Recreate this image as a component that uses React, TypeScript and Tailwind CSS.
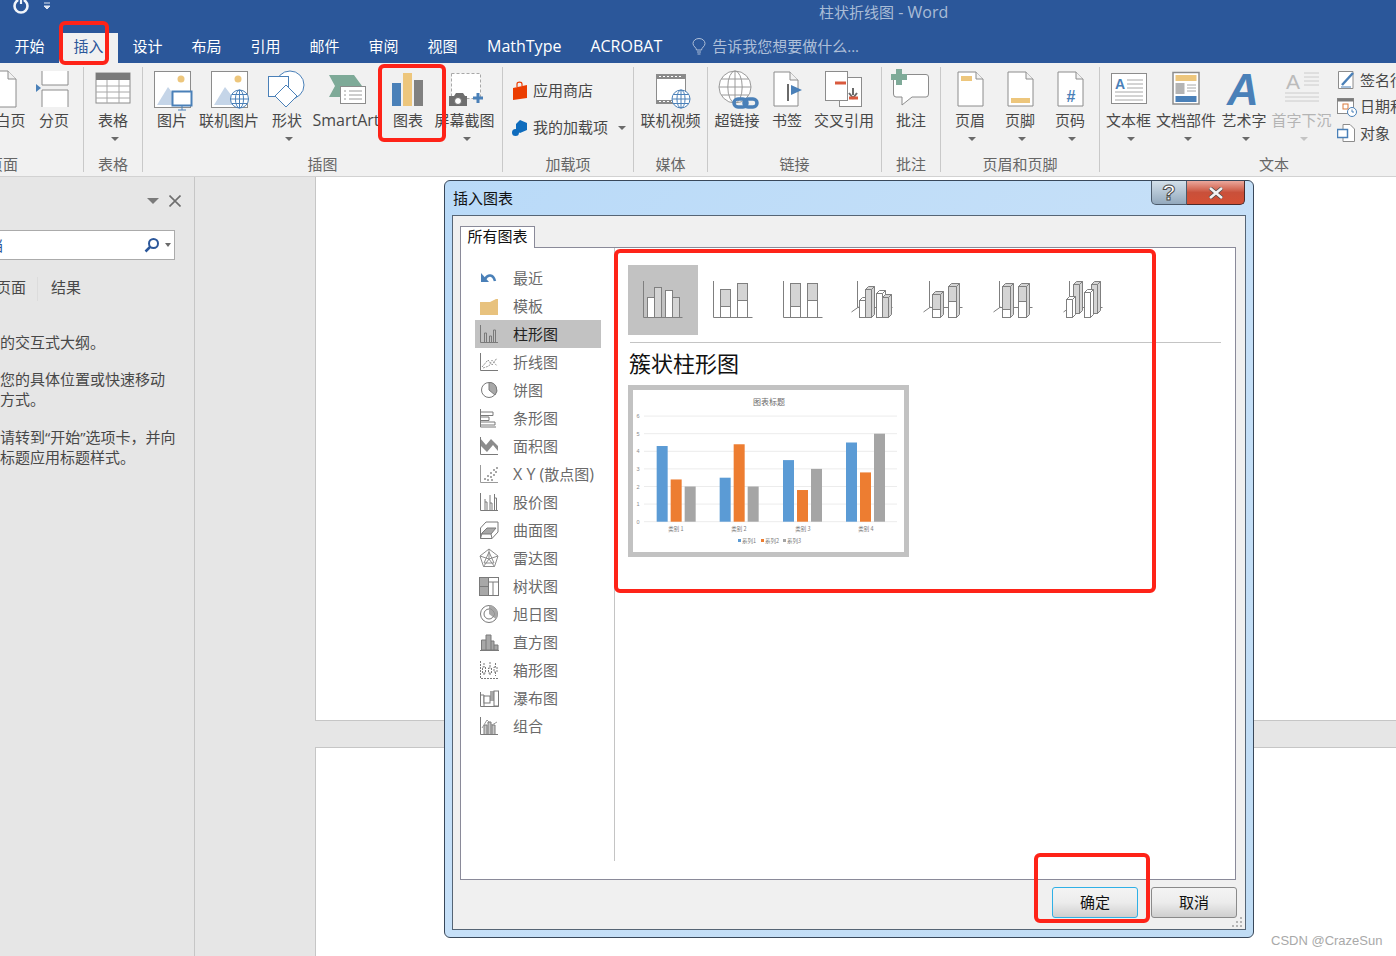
import React from "react";

const G = "#8c8c8c";
const B = "#4a80b8";
const Y = "#edc67c";
const T = "#7eaa98";
const R = "#d9593d";

function Ic({ children }: { children: React.ReactNode }) {
  return (
    <svg width="60" height="40" viewBox="-30 0 60 40" className="shrink-0 overflow-visible" fill="none">
      {children}
    </svg>
  );
}

function Page({ x0, x1, y0, y1, fold = 7 }: { x0: number; x1: number; y0: number; y1: number; fold?: number }) {
  return (
    <>
      <path d={`M${x0} ${y0}H${x1 - fold}L${x1} ${y0 + fold}V${y1}H${x0}Z`} fill="#fff" stroke={G} />
      <path d={`M${x1 - fold} ${y0}V${y0 + fold}H${x1}`} stroke={G} fill="#f1f1f1" />
    </>
  );
}

function Globe({ cx, cy, r, c = B, w = 1 }: { cx: number; cy: number; r: number; c?: string; w?: number }) {
  return (
    <g stroke={c} strokeWidth={w} fill="#fff">
      <circle cx={cx} cy={cy} r={r} />
      <ellipse cx={cx} cy={cy} rx={r * 0.45} ry={r} fill="none" />
      <path d={`M${cx - r} ${cy}H${cx + r}M${cx - r * 0.85} ${cy - r * 0.5}H${cx + r * 0.85}M${cx - r * 0.85} ${cy + r * 0.5}H${cx + r * 0.85}M${cx} ${cy - r}V${cy + r}`} fill="none" />
    </g>
  );
}

function Btn({ w, label, arrow, dim, latin, children }: { w: string; label: string; arrow?: boolean; dim?: boolean; latin?: boolean; children: React.ReactNode }) {
  return (
    <div className={`${w} flex flex-col items-center shrink-0`}>
      <Ic>{children}</Ic>
      <div className={`mt-px h-[22px] leading-[22px] whitespace-nowrap ${latin ? "text-[16px]" : "text-[15px]"} ${dim ? "text-[#b4b4b4]" : "text-[#484848]"}`}>{label}</div>
      {arrow ? (
        <div className={`mt-[6px] ml-[4px] w-0 h-0 border-x-[4px] border-x-transparent border-t-[4px] ${dim ? "border-t-[#c4c4c4]" : "border-t-[#6a6a6a]"}`} />
      ) : null}
    </div>
  );
}

function Group({ w, label, border = true, children }: { w: string; label: string; border?: boolean; children: React.ReactNode }) {
  return (
    <div className={`${w} shrink-0 mt-[4px] h-[105px] pt-px ${border ? "border-r border-[#c9c9c9]" : ""}`}>
      <div className="h-[88px] flex">{children}</div>
      <div className="h-[16px] leading-[16px] text-center text-[15px] text-[#666666] whitespace-nowrap">{label}</div>
    </div>
  );
}

function Ribbon() {
  return (
    <div className="h-[114px] bg-[#f1f1f1] border-b border-[#d2d2d2] overflow-hidden">
      <div className="flex -ml-[77px] w-[1600px]">
        <Group w="w-[161px]" label="页面">
          <Btn w="w-[47px]" label="封面"><Page x0={-12} x1={12} y0={3} y1={39} /></Btn>
          <Btn w="w-[66px]" label="空白页"><Page x0={-13} x1={13} y0={3} y1={39} fold={8} /></Btn>
          <Btn w="w-[36px]" label="分页">
            <path d="M-12 3V17H14V3M-12 39V22H14V39" stroke={G} fill="#fff" />
            <path d="M-18 16L-13 20L-18 24Z" fill={B} />
          </Btn>
        </Group>
        <Group w="w-[59px]" label="表格">
          <Btn w="w-[58px]" label="表格" arrow>
            <rect x="-17" y="5" width="34" height="30" fill="#fff" stroke={G} />
            <rect x="-17" y="5" width="34" height="7" fill="#7a7a7a" />
            <path d="M-17 18H17M-17 24H17M-17 30H17M-6 12V35M6 12V35" stroke="#a8a8a8" />
          </Btn>
        </Group>
        <Group w="w-[360px]" label="插图">
          <div className="w-[7px] shrink-0" />
          <Btn w="w-[44px]" label="图片">
            <rect x="-17.5" y="3.5" width="36" height="36" fill="#fff" stroke={G} />
            <circle cx="9" cy="11" r="3.5" fill={Y} />
            <path d="M-15 37L-4 19L3 28L3 37Z" fill="#c5d5e8" />
            <rect x="0.5" y="23.5" width="19" height="14" fill="#fff" stroke={B} strokeWidth="2" />
            <path d="M10 38V42M6 42H14" stroke={B} />
          </Btn>
          <Btn w="w-[70px]" label="联机图片">
            <rect x="-17.5" y="3.5" width="36" height="36" fill="#fff" stroke={G} />
            <circle cx="9" cy="11" r="3.5" fill={Y} />
            <path d="M-15 37L-4 19L6 32V37Z" fill="#c5d5e8" />
            <Globe cx={10.5} cy={31} r={9} />
          </Btn>
          <Btn w="w-[46px]" label="形状" arrow>
            <circle cx="3" cy="17" r="14" fill="#fff" stroke={B} />
            <rect x="-18.5" y="8.5" width="20" height="20" fill="#fff" stroke={B} />
            <path d="M-1 17L10 28L-1 39L-12 28Z" fill="#fff" stroke={B} />
          </Btn>
          <Btn w="w-[72px]" label="SmartArt" latin>
            <path d="M-17 7H8L16 18H-6V29H-17L-11 18Z" fill={T} />
            <rect x="-5.5" y="18.5" width="25" height="17" fill="#fff" stroke={G} />
            <path d="M-2 23H0M-2 27H0M-2 31H0M3 23H16M3 27H16M3 31H16" stroke="#9a9a9a" />
          </Btn>
          <Btn w="w-[52px]" label="图表">
            <rect x="-16" y="15" width="9" height="23" fill={B} />
            <rect x="-5" y="5" width="9" height="33" fill={Y} />
            <rect x="6" y="12" width="9" height="26" fill="#808080" />
          </Btn>
          <Btn w="w-[61px]" label="屏幕截图" arrow>
            <rect x="-13.5" y="5.5" width="29" height="25" fill="#fff" stroke="#a8a8a8" strokeDasharray="3 2" />
            <path d="M-16 28H-11L-9 25H-2L0 28H2V38H-16Z" fill="#6e6e6e" />
            <circle cx="-7" cy="33" r="3.5" fill="#fff" stroke="#6e6e6e" />
            <path d="M13 25V35M8 30H18" stroke={B} strokeWidth="3" />
          </Btn>
        </Group>
        <Group w="w-[131px]" label="加载项">
          <div className="pl-[9px] pt-[4px] flex flex-col">
            <div className="h-[37px] flex items-center gap-[5px] text-[15px] text-[#484848] whitespace-nowrap">
              <svg width="16" height="20" viewBox="0 0 16 20" className="shrink-0">
                <path d="M1 7L15 4V17L1 19Z" fill="#eb3c00" />
                <path d="M5 6V3C5 0.5 10 0.5 10 3V5" stroke="#eb3c00" strokeWidth="1.2" fill="none" />
              </svg>
              应用商店
            </div>
            <div className="h-[37px] flex items-center gap-[5px] text-[15px] text-[#484848] whitespace-nowrap">
              <svg width="16" height="18" viewBox="0 0 16 18" className="shrink-0">
                <path d="M8 1L15 4V11L8 14L4 12V5Z" fill="#0f6cbd" />
                <circle cx="3.5" cy="13.5" r="3.5" fill="#0f6cbd" />
              </svg>
              我的加载项
              <div className="ml-[5px] w-0 h-0 border-x-[4px] border-x-transparent border-t-[4px] border-t-[#6a6a6a]" />
            </div>
          </div>
        </Group>
        <Group w="w-[74px]" label="媒体">
          <Btn w="w-[73px]" label="联机视频">
            <rect x="-14.5" y="6.5" width="29" height="29" fill="#fff" stroke={G} />
            <path d="M-14 7H14V11H-14ZM-14 32H14V35.5H-14Z" fill="#8a8a8a" />
            <path d="M-12 8.5H12M-12 33.5H12" stroke="#fff" strokeDasharray="2 2" />
            <Globe cx={10} cy={31} r={9} />
          </Btn>
        </Group>
        <Group w="w-[174px]" label="链接">
          <div className="w-[4px] shrink-0" />
          <Btn w="w-[50px]" label="超链接">
            <Globe cx={-2} cy={19} r={16} c="#9a9a9a" />
            <g stroke={B} strokeWidth="3.5" fill="none">
              <rect x="-3" y="31" width="13" height="8" rx="4" />
              <rect x="7" y="31" width="13" height="8" rx="4" />
            </g>
          </Btn>
          <Btn w="w-[50px]" label="书签">
            <Page x0={-13} x1={11} y0={4} y1={38} fold={8} />
            <path d="M1 16V33" stroke="#6a6a6a" strokeWidth="2" />
            <path d="M4 17L15 22L4 27Z" fill={B} />
          </Btn>
          <Btn w="w-[64px]" label="交叉引用">
            <rect x="-4.5" y="9.5" width="22" height="29" fill="#fff" stroke={G} />
            <rect x="-18.5" y="3.5" width="22" height="29" fill="#fff" stroke={G} />
            <path d="M-9 15H2" stroke={R} strokeWidth="3" />
            <path d="M9 20V27M5 25L9 30L13 25" stroke="#6a6a6a" strokeWidth="2" />
            <path d="M5 30H14" stroke={R} strokeWidth="3" />
          </Btn>
        </Group>
        <Group w="w-[59px]" label="批注">
          <Btn w="w-[58px]" label="批注">
            <path d="M-16 6.5H15Q17.5 6.5 17.5 9V26Q17.5 29 15 29H1L-9 37V29H-15Q-17.5 29 -17.5 26V9Q-17.5 6.5 -16 6.5Z" fill="#fff" stroke={G} />
            <path d="M-12 1V17M-20 9H-4" stroke={T} strokeWidth="6" />
          </Btn>
        </Group>
        <Group w="w-[159px]" label="页眉和页脚">
          <div className="w-[4px] shrink-0" />
          <Btn w="w-[50px]" label="页眉" arrow>
            <Page x0={-12} x1={13} y0={4} y1={38} />
            <rect x="-9" y="8" width="11" height="5" fill={Y} />
          </Btn>
          <Btn w="w-[50px]" label="页脚" arrow>
            <Page x0={-12} x1={13} y0={4} y1={38} />
            <rect x="-9" y="30" width="19" height="5" fill={Y} />
          </Btn>
          <Btn w="w-[50px]" label="页码" arrow>
            <Page x0={-12} x1={13} y0={4} y1={38} />
            <text x="1" y="34" textAnchor="middle" fontSize="16" fontFamily="Liberation Sans" fontWeight="700" fill={B}>#</text>
          </Btn>
        </Group>
        <Group w="w-[348px]" label="文本" border={false}>
          <div className="w-[3px] shrink-0" />
          <Btn w="w-[51px]" label="文本框" arrow>
            <rect x="-17.5" y="5.5" width="35" height="30" fill="#fff" stroke={G} />
            <text x="-14" y="21" fontSize="14" fontWeight="700" fontFamily="Liberation Sans" fill={B}>A</text>
            <path d="M-2 12H14M-2 16H14M-2 20H14M-14 24H14M-14 28H14M-14 32H14" stroke="#a8a8a8" />
          </Btn>
          <Btn w="w-[64px]" label="文档部件" arrow>
            <rect x="-13" y="4.5" width="26" height="31.5" fill="#fff" stroke={G} strokeWidth="1.5" />
            <rect x="-10.5" y="7" width="21" height="6" fill={Y} />
            <rect x="-10.5" y="15" width="9" height="11" fill="#b4b4b4" />
            <path d="M1 17H10M1 20H10M1 23H10" stroke="#a8a8a8" />
            <rect x="-10.5" y="28" width="21" height="6" fill={B} />
          </Btn>
          <Btn w="w-[52px]" label="艺术字" arrow>
            <text x="-1" y="37" textAnchor="middle" fontSize="44" fontFamily="Liberation Sans" fontStyle="italic" fontWeight="700" fill={B}>A</text>
          </Btn>
          <Btn w="w-[63px]" label="首字下沉" arrow dim>
            <text x="-16" y="21" fontSize="21" fontFamily="Liberation Sans" fill="#bbbbbb">A</text>
            <path d="M2 5H17M2 9H17M2 13H17M2 17H17M-17 25H17M-17 29H17M-17 33H17" stroke="#cccccc" />
          </Btn>
          <div className="ml-[4px] -mt-px flex flex-col text-[15px] text-[#484848] whitespace-nowrap">
            <div className="h-[26px] flex items-center gap-[3px]">
              <svg width="20" height="20" viewBox="0 0 20 20" className="shrink-0">
                <path d="M1.5 1.5H16V18.5H1.5Z" fill="#fff" stroke={G} />
                <path d="M5 15L16 3" stroke={B} strokeWidth="2.5" />
                <path d="M4 17H14" stroke={B} />
              </svg>
              签名行
            </div>
            <div className="h-[27px] flex items-center gap-[3px]">
              <svg width="20" height="20" viewBox="0 0 20 20" className="shrink-0">
                <rect x="0.5" y="1.5" width="16" height="15" fill="#fff" stroke={G} />
                <rect x="0.5" y="1.5" width="16" height="3" fill="#7a7a7a" />
                <rect x="6" y="7" width="5" height="5" fill="#fff" stroke="#d97a3d" />
                <circle cx="15" cy="15" r="4.5" fill="#fff" stroke={B} />
                <path d="M15 12.5V15H17" stroke={B} fill="none" />
              </svg>
              日期和时间
            </div>
            <div className="h-[26px] flex items-center gap-[3px]">
              <svg width="20" height="20" viewBox="0 0 20 20" className="shrink-0">
                <path d="M6 1.5H13L17.5 6V18.5H6Z" fill="#fff" stroke={G} />
                <rect x="0.5" y="6.5" width="10" height="8" fill="#fff" stroke={B} strokeWidth="1.5" />
              </svg>
              对象
            </div>
          </div>
        </Group>
      </div>
    </div>
  );
}

const listIcons: Record<string, React.ReactNode> = {
  recent: (
    <>
      <path d="M6 11C9 6 14 6 16 13" stroke={B} strokeWidth="2.5" fill="none" />
      <path d="M2 5V14H10Z" fill={B} />
    </>
  ),
  folder: <path d="M1 6H11L17 3H19V19H1Z" fill="#e8c27e" />,
  col: <path d="M1.5 1V18.5H19M5.5 18V9H7.5V18M10.5 18V12H12.5V18M14.5 18V6H16.5V18" stroke="#7a7a7a" fill="none" />,
  line: (
    <>
      <path d="M1.5 1V18.5H19" stroke="#7a7a7a" fill="none" />
      <path d="M3 15L9 8L13 13L18 6" stroke="#8c8c8c" strokeDasharray="2 1" fill="none" />
      <path d="M4 16L10 14L13 8L18 14" stroke="#a0a0a0" strokeDasharray="2 1" fill="none" />
    </>
  ),
  pie: (
    <>
      <circle cx="10" cy="10" r="7.5" fill="#fff" stroke="#7a7a7a" />
      <path d="M10 10V2.5A7.5 7.5 0 0 1 16 15Z" fill="#a8a8a8" stroke="#7a7a7a" />
    </>
  ),
  bar: <path d="M1.5 1V19H17M2 4H14V7.5H2M2 9H10V12.5H2M2 14H16V17H2" stroke="#7a7a7a" fill="none" />,
  area: (
    <>
      <path d="M1 2L7 9L12 3L19 10V15L14 9L8 16L1 9Z" fill="#8c8c8c" />
      <path d="M1.5 1V18.5H19" stroke="#7a7a7a" fill="none" />
    </>
  ),
  xy: (
    <>
      <path d="M1.5 1V18.5H19" stroke="#9a9a9a" fill="none" />
      <path d="M5 14h2v2h-2zM8 11h2v2h-2zM8 15h2v2h-2zM11 8h2v2h-2zM11 12h2v2h-2zM14 5h2v2h-2zM14 10h2v2h-2zM16 7h2v2h-2zM12 15h2v2h-2zM17 3h2v2h-2z" fill="#a8a8a8" />
    </>
  ),
  stock: <path d="M1.5 1V18.5H19M6 7V18M6 10H8V18M11 3V18M11 11H13V18M15.5 2V18M15.5 6H17.5V18" stroke="#7a7a7a" fill="none" />,
  surface: (
    <>
      <path d="M1.5 8L7 2H19V12L13 18.5H1.5Z" fill="#fff" stroke="#7a7a7a" />
      <path d="M3 13L8 8H17L12 14H3Z" fill="#a8a8a8" stroke="#7a7a7a" />
      <path d="M1.5 18.5L3 13M13 18.5L12 14M13 18.5" stroke="#7a7a7a" fill="none" />
    </>
  ),
  radar: <path d="M10 1L19 8L15.5 18.5H4.5L1 8ZM10 1V11M1 8L10 11L19 8M4.5 18.5L10 11L15.5 18.5M10 4L5 15H15L10 4" stroke="#8c8c8c" fill="none" />,
  tree: (
    <>
      <rect x="0.5" y="1.5" width="19" height="18" fill="#fff" stroke="#7a7a7a" />
      <rect x="0.5" y="1.5" width="9" height="9" fill="#a8a8a8" stroke="#7a7a7a" />
      <rect x="0.5" y="10.5" width="9" height="9" fill="#a8a8a8" stroke="#7a7a7a" />
      <path d="M9.5 6H19.5M14 6V19.5" stroke="#7a7a7a" />
    </>
  ),
  sun: (
    <>
      <circle cx="10" cy="10" r="8.5" fill="#fff" stroke="#7a7a7a" />
      <path d="M10 1.5A8.5 8.5 0 0 1 17 15L14 13A5 5 0 0 0 10 5Z" fill="#a8a8a8" />
      <circle cx="10" cy="10" r="5" fill="none" stroke="#7a7a7a" />
      <path d="M10 5A5 5 0 0 1 14 13L10 10Z" fill="#a8a8a8" />
    </>
  ),
  hist: (
    <>
      <path d="M2.5 18V8H7V3H12V9H15V13H19V18Z" fill="#a8a8a8" stroke="#7a7a7a" />
      <path d="M7 8V18M12 9V18M15 13V18M1 18.5H20" stroke="#7a7a7a" fill="none" />
    </>
  ),
  box: <path d="M1.5 1V18.5H19M5 3V7M3.5 7H6.5V13H3.5ZM5 13V16M11 2V8M9.5 8H12.5V13H9.5ZM11 13V16M16.5 3V7M15 7H18V12H15ZM16.5 12V16" stroke="#7a7a7a" strokeDasharray="2 1" fill="none" />,
  fall: (
    <>
      <path d="M1.5 4V18.5H19.5V4M1.5 7H5V18" stroke="#7a7a7a" fill="none" />
      <rect x="11" y="3" width="4" height="10" fill="#a8a8a8" />
      <rect x="5" y="8" width="6" height="7" fill="#fff" stroke="#7a7a7a" />
      <rect x="15" y="3" width="4.5" height="15" fill="#fff" stroke="#7a7a7a" />
    </>
  ),
  combo: (
    <>
      <path d="M1.5 1V18.5H19" stroke="#7a7a7a" fill="none" />
      <path d="M5 18V9H8V18M9 18V6H12V18M13 18V9H16V18" stroke="#7a7a7a" fill="#c8c8c8" />
      <path d="M3 12L8 4L13 9L18 6" stroke="#9a9a9a" fill="none" />
    </>
  ),
};

const listItems: [string, React.ReactNode][] = [
  ["recent", "最近"],
  ["folder", "模板"],
  ["col", "柱形图"],
  ["line", "折线图"],
  ["pie", "饼图"],
  ["bar", "条形图"],
  ["area", "面积图"],
  ["xy", <span key="xy"><span className="text-[16px]">X Y (</span>散点图<span className="text-[16px]">)</span></span>],
  ["stock", "股价图"],
  ["surface", "曲面图"],
  ["radar", "雷达图"],
  ["tree", "树状图"],
  ["sun", "旭日图"],
  ["hist", "直方图"],
  ["box", "箱形图"],
  ["fall", "瀑布图"],
  ["combo", "组合"],
];

function Cuboid({ x, w, top, bot, mid, d = 3, fill = "#fff" }: { x: number; w: number; top: number; bot: number; mid?: number; d?: number; fill?: string }) {
  const topFill = mid !== undefined ? "#d4d4d4" : fill;
  return (
    <g stroke="#7f7f7f">
      <rect x={x} y={top} width={w} height={bot - top} fill={topFill} />
      {mid !== undefined ? <rect x={x} y={mid} width={w} height={bot - mid} fill="#fff" /> : null}
      <path d={`M${x} ${top}L${x + d} ${top - d}H${x + w + d}L${x + w} ${top}Z`} fill={topFill} />
      <path d={`M${x + w} ${top}L${x + w + d} ${top - d}V${bot - d}L${x + w} ${bot}Z`} fill={topFill} />
    </g>
  );
}

function Bar2({ x, w, top, mid, fill }: { x: number; w: number; top: number; mid?: number; fill?: string }) {
  return (
    <g stroke="#7f7f7f">
      <rect x={x} y={top} width={w} height={52.5 - top} fill={mid !== undefined ? "#d4d4d4" : fill} />
      {mid !== undefined ? <rect x={x} y={mid} width={w} height={52.5 - mid} fill="#fff" /> : null}
    </g>
  );
}

const Axes2D = () => <path d="M15.5 16V52.5H54.5" stroke="#7f7f7f" fill="none" />;
const Axes3D = ({ x }: { x: number }) => (
  <path d={`M${x} 16V42.5H54.5M${x - 6} 47L${x + 1} 42`} stroke="#7f7f7f" fill="none" />
);

const subTypes: React.ReactNode[] = [
  <>
    <Axes2D />
    <Bar2 x={19.5} w={7} top={32.5} fill="#fff" />
    <Bar2 x={26.5} w={7} top={22.5} fill="#d4d4d4" />
    <Bar2 x={37.5} w={7} top={25.5} fill="#fff" />
    <Bar2 x={44.5} w={7} top={32.5} fill="#d4d4d4" />
  </>,
  <>
    <Axes2D />
    <Bar2 x={22.5} w={10} top={24.5} mid={41.5} />
    <Bar2 x={39.5} w={10} top={18.5} mid={35.5} />
  </>,
  <>
    <Axes2D />
    <Bar2 x={22.5} w={10} top={18.5} mid={41.5} />
    <Bar2 x={39.5} w={10} top={18.5} mid={35.5} />
  </>,
  <>
    <Axes3D x={19.5} />
    <Cuboid x={21.5} w={6} top={35.5} bot={52.5} />
    <Cuboid x={27.5} w={6} top={24.5} bot={52.5} fill="#d4d4d4" />
    <Cuboid x={38.5} w={6} top={28.5} bot={52.5} />
    <Cuboid x={44.5} w={6} top={32.5} bot={52.5} fill="#d4d4d4" />
  </>,
  <>
    <Axes3D x={21.5} />
    <Cuboid x={24.5} w={8} top={29.5} mid={44.5} bot={52.5} />
    <Cuboid x={40.5} w={8} top={21.5} mid={36.5} bot={52.5} />
  </>,
  <>
    <Axes3D x={21.5} />
    <Cuboid x={24.5} w={8} top={21.5} mid={44.5} bot={52.5} />
    <Cuboid x={40.5} w={8} top={21.5} mid={36.5} bot={52.5} />
  </>,
  <>
    <Axes3D x={21.5} />
    <Cuboid x={25.5} w={6} top={19.5} bot={48.5} fill="#d4d4d4" />
    <Cuboid x={43.5} w={6} top={19.5} bot={48.5} fill="#d4d4d4" />
    <Cuboid x={18.5} w={6} top={34.5} bot={52.5} />
    <Cuboid x={36.5} w={6} top={27.5} bot={52.5} />
  </>,
];

function ChartPreview() {
  const y0 = 131.7;
  const unit = 17.6;
  const vals: [number, string, number][] = [
    [110, "#5b9bd5", 4.3], [152, "#ed7d31", 2.4], [194, "#a5a5a5", 2],
    [299, "#5b9bd5", 2.5], [341, "#ed7d31", 4.4], [383, "#a5a5a5", 2],
    [489, "#5b9bd5", 3.5], [531, "#ed7d31", 1.8], [573, "#a5a5a5", 3],
    [678, "#5b9bd5", 4.5], [720, "#ed7d31", 2.8], [762, "#a5a5a5", 5],
  ];
  const tf = "Noto Sans CJK SC";
  return (
    <svg width="271" height="162" viewBox="0 0 271 162" className="bg-white block">
      <text x="136" y="15" textAnchor="middle" fontSize="8" fill="#6a6a6a" fontFamily={tf}>图表标题</text>
      {[0, 1, 2, 3, 4, 5, 6].map((n) => (
        <g key={n}>
          <line x1="11" x2="264" y1={y0 - n * unit} y2={y0 - n * unit} stroke="#ececec" />
          <text x="5" y={y0 - n * unit + 2} textAnchor="middle" fontSize="5.5" fill="#8a8a8a" fontFamily="Liberation Sans">{n}</text>
        </g>
      ))}
      {vals.map(([zx, c, v]) => (
        <rect key={zx} x={zx / 3 + 620 - 633} y={y0 - v * unit} width="11" height={v * unit} fill={c} />
      ))}
      {[
        ["类别 1", 43], ["类别 2", 106], ["类别 3", 170], ["类别 4", 233],
      ].map(([t, x]) => (
        <text key={t as string} x={x as number} y="141" textAnchor="middle" fontSize="5.5" fill="#7a7a7a" fontFamily={tf}>{t}</text>
      ))}
      {[
        ["系列1", 105, "#5b9bd5"], ["系列2", 128, "#ed7d31"], ["系列3", 150, "#a5a5a5"],
      ].map(([t, x, c]) => (
        <g key={t as string}>
          <rect x={x as number} y="149" width="3" height="3" fill={c as string} />
          <text x={(x as number) + 4} y="153" fontSize="5.5" fill="#7a7a7a" fontFamily={tf}>{t}</text>
        </g>
      ))}
    </svg>
  );
}

function Dialog() {
  return (
    <div className="absolute left-[444px] top-[180px] w-[810px] h-[758px] rounded-[6px] border border-[#39485a] bg-linear-to-br from-[#b9daf8] via-[#c6e0f8] to-[#c0dcf4] flex flex-col">
      <div className="h-[34px] shrink-0 flex justify-between pl-[8px] pr-[8px]">
        <div className="h-[34px] leading-[34px] text-[15px] text-[#111111]">插入图表</div>
        <div className="flex h-[24px]">
          <div className="w-[36px] h-[24px] flex items-center justify-center rounded-bl-[5px] border-x border-b border-[#4b5a6a] bg-linear-to-b from-[#d3e0ea] to-[#93a9bd] text-[22px] leading-[22px] font-bold text-white [-webkit-text-stroke:1px_#4a4a4a] font-['Liberation_Sans',sans-serif]">?</div>
          <div className="w-[58px] h-[24px] flex items-center justify-center rounded-br-[5px] border-r border-b border-[#4b2a2a] bg-linear-to-b from-[#eaa79c] via-[#c9503a] to-[#d44f33]">
            <svg width="16" height="12" viewBox="0 0 16 12">
              <path d="M2 1L14 11M14 1L2 11" stroke="#4a4a4a" strokeWidth="4" />
              <path d="M2 1L14 11M14 1L2 11" stroke="#f4f4f4" strokeWidth="2.6" />
            </svg>
          </div>
        </div>
      </div>
      <div className="relative mx-[7px] h-[715px] border border-[#566575] bg-[#f0f0f0] pl-[7px] pt-[10px]">
        <div className="relative z-10 w-[75px] h-[22px] border-x border-t border-[#8a8a99] bg-white text-center text-[15px] leading-[18px] text-[#111111]">所有图表</div>
        <div className="w-[776px] h-[633px] -mt-px border border-[#8a8a99] bg-white flex">
          <div className="w-[154px] h-[613px] shrink-0 border-r border-[#c4c4c4] pt-[16px] pl-[14px]">
            {listItems.map(([k, t]) => (
              <div key={k as string} className={`w-[126px] h-[28px] flex items-center pl-[4px] gap-[14px] text-[15px] whitespace-nowrap ${k === "col" ? "bg-[#c2c2c2] text-[#222222]" : "text-[#6a6a6a]"}`}>
                <svg width="20" height="20" viewBox="0 0 20 20" className="shrink-0 overflow-visible">
                  {listIcons[k as string]}
                </svg>
                {t}
              </div>
            ))}
          </div>
          <div className="pl-[13px] pt-[17px]">
            <div className="flex h-[70px]">
              {subTypes.map((s, i) => (
                <svg key={i} width="70" height="70" viewBox="0 0 70 70" className={`shrink-0 ${i === 0 ? "bg-[#c2c2c2]" : ""}`}>
                  {s}
                </svg>
              ))}
            </div>
            <div className="mt-[7px] ml-[2px] w-[591px] h-px bg-[#c4c4c4]" />
            <div className="h-[42px] ml-px leading-[40px] text-[22px] text-[#111111] whitespace-nowrap">簇状柱形图</div>
            <div className="w-[281px] h-[172px] border-[5px] border-[#c2c2c2]">
              <ChartPreview />
            </div>
          </div>
        </div>
        <div className="w-[777px] mt-[7px] flex justify-end gap-[13px]">
          <div className="w-[86px] h-[31px] rounded-[3px] border border-[#2fb0e6] bg-linear-to-b from-[#f4f4f4] via-[#ececec] to-[#cfcfcf] text-center text-[15px] leading-[29px] text-[#111111]">确定</div>
          <div className="w-[86px] h-[31px] rounded-[3px] border border-[#8a8a8a] bg-linear-to-b from-[#f4f4f4] via-[#ececec] to-[#cfcfcf] text-center text-[15px] leading-[29px] text-[#111111]">取消</div>
        </div>
        <svg width="12" height="12" viewBox="0 0 12 12" className="absolute right-[2px] bottom-[1px]">
          <path d="M9 1h2v2H9zM5 5h2v2H5zM9 5h2v2H9zM1 9h2v2H1zM5 9h2v2H5zM9 9h2v2H9z" fill="#b4b4b4" />
        </svg>
      </div>
    </div>
  );
}

function Pane() {
  return (
    <div className="w-[195px] shrink-0 border-r border-[#c6c6c6] bg-[#e6e6e6] pt-[14px] text-[15px] text-[#484848] overflow-hidden">
      <div className="h-[20px] flex items-center justify-end pr-[13px] gap-[10px]">
        <div className="w-0 h-0 border-x-[6px] border-x-transparent border-t-[6px] border-t-[#7a7a7a]" />
        <svg width="12" height="12" viewBox="0 0 12 12">
          <path d="M0.5 0.5L11.5 11.5M11.5 0.5L0.5 11.5" stroke="#6e6e6e" strokeWidth="1.6" />
        </svg>
      </div>
      <div className="mt-[19px] w-[175px] h-[30px] border border-l-0 border-[#ababab] bg-white flex items-center">
        <div className="-ml-[12px] text-[#2b579a] whitespace-nowrap">档</div>
        <svg width="16" height="16" viewBox="0 0 16 16" className="ml-auto -mr-[3px]">
          <circle cx="9.5" cy="6.5" r="4.5" fill="none" stroke="#2b579a" strokeWidth="2" />
          <path d="M6 10L1.5 14.5" stroke="#2b579a" strokeWidth="2.5" />
        </svg>
        <div className="ml-[8px] mr-[3px] w-0 h-0 border-x-[3.5px] border-x-transparent border-t-[4px] border-t-[#6a6a6a]" />
      </div>
      <div className="mt-[17px] h-[20px] leading-[20px] flex whitespace-nowrap -ml-[4px]">
        <div className="w-[41px]">页面</div>
        <div className="w-px h-[24px] bg-[#dcdcdc]" />
        <div className="ml-[13px]">结果</div>
      </div>
      <div className="mt-[35px] leading-[20px] whitespace-nowrap">的交互式大纲。</div>
      <div className="mt-[18px] leading-[19.5px] whitespace-nowrap">
        您的具体位置或快速移动
        <br />
        方式。
      </div>
      <div className="mt-[19px] leading-[19.5px] whitespace-nowrap">
        请转到“开始”选项卡，并向
        <br />
        标题应用标题样式。
      </div>
    </div>
  );
}

function Frame({ cls }: { cls: string }) {
  return <div className={`absolute border-[4px] border-[#fe2318] rounded-[6px] ${cls}`} />;
}

export default function App() {
  const tabs = ["开始", "插入", "设计", "布局", "引用", "邮件", "审阅", "视图"];
  return (
    <div className="relative w-[1396px] h-[956px] overflow-hidden bg-white font-['Open_Sans','Noto_Sans_CJK_SC',sans-serif]">
      <div className="h-[63px] bg-[#2b579a]">
        <div className="h-[33px] flex items-start">
          <svg width="20" height="20" viewBox="0 0 20 20" className="ml-[11px] -mt-[4px] shrink-0">
            <circle cx="10" cy="10" r="6.5" fill="none" stroke="#f1f5fa" strokeWidth="2.6" />
            <path d="M10 1V8" stroke="#2b579a" strokeWidth="5" />
            <path d="M10 1V8" stroke="#f1f5fa" strokeWidth="2.2" />
          </svg>
          <svg width="8" height="8" viewBox="0 0 8 8" className="ml-[12px] mt-[2px] shrink-0">
            <path d="M1 1H7M1 4H7L4 7Z" stroke="#dfe7f2" fill="#dfe7f2" />
          </svg>
          <div className="ml-[768px] h-[25px] leading-[25px] text-[15px] text-[#a9bcd6] whitespace-nowrap">
            柱状折线图<span className="text-[16px]"> - Word</span>
          </div>
        </div>
        <div className="h-[30px] flex items-center text-[15px] text-white whitespace-nowrap">
          {tabs.map((t) => (
            <div key={t} className={`w-[59px] h-[30px] leading-[26px] text-center ${t === "插入" ? "bg-[#f1f1f1] text-[#2b579a]" : ""}`}>{t}</div>
          ))}
          <div className="ml-[15px] text-[16px] leading-[26px] h-[30px]">MathType</div>
          <div className="ml-[29px] text-[16px] leading-[26px] h-[30px]">ACROBAT</div>
          <svg width="14" height="18" viewBox="0 0 14 18" className="ml-[30px] -mt-[3px] shrink-0">
            <path d="M4.5 12C4.5 9.5 1 8.5 1 5.5A6 5 0 0 1 13 5.5C13 8.5 9.5 9.5 9.5 12Z" fill="none" stroke="#aebfd8" />
            <path d="M5 14H9M5.5 16H8.5" stroke="#aebfd8" />
          </svg>
          <div className="ml-[6px] text-[#aebfd8] h-[30px] leading-[26px]">告诉我您想要做什么...</div>
        </div>
      </div>
      <Ribbon />
      <div className="flex h-[779px]">
        <Pane />
        <div className="flex-1 bg-[#e6e6e6] pl-[120px]">
          <div className="h-[544px] bg-white border-l border-b border-[#c6c6c6]" />
          <div className="mt-[26px] h-[209px] bg-white border-l border-t border-[#c6c6c6]" />
        </div>
      </div>
      <Dialog />
      <Frame cls="left-[59px] top-[21px] w-[50px] h-[44px]" />
      <Frame cls="left-[378px] top-[64px] w-[68px] h-[78px]" />
      <Frame cls="left-[614px] top-[249px] w-[542px] h-[344px]" />
      <Frame cls="left-[1034px] top-[853px] w-[116px] h-[70px]" />
      <div className="absolute left-[1271px] top-[933px] text-[13px] leading-[16px] text-[#a9a9a9] font-['Liberation_Sans',sans-serif] whitespace-nowrap">CSDN @CrazeSun</div>
    </div>
  );
}
